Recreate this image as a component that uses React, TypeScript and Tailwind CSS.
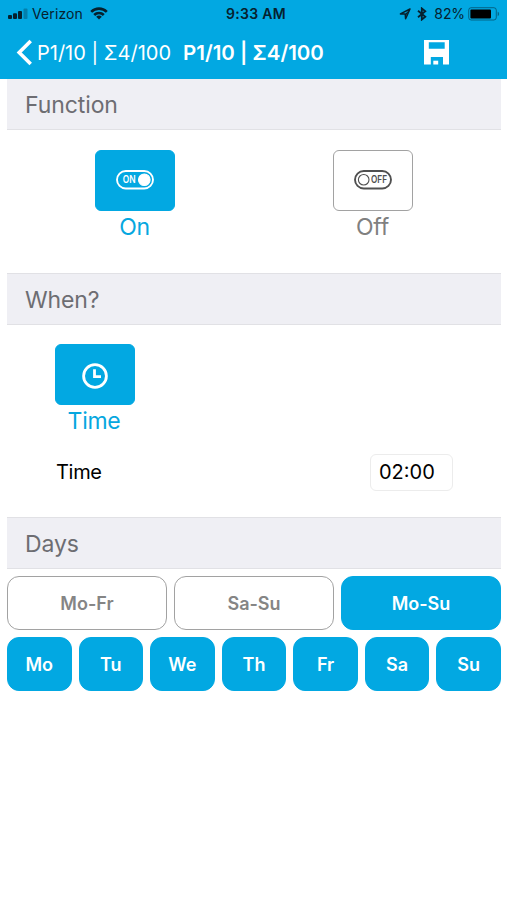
import { useState } from "react";
import type { ReactNode } from "react";

const DAYS = ["Mo", "Tu", "We", "Th", "Fr", "Sa", "Su"];

const PRESETS = [
    { label: "Mo-Fr", days: ["Mo", "Tu", "We", "Th", "Fr"] },
    { label: "Sa-Su", days: ["Sa", "Su"] },
    { label: "Mo-Su", days: DAYS },
];

function StatusBar() {
    return (
        <div className="grid h-[27px] grid-cols-[1fr_auto_1fr] items-center pl-2 pr-[7px] text-[13px] leading-none text-[#06212e]">
            <div className="flex items-center">
                <svg width="20" height="12" viewBox="0 0 20 12" fill="#06212e">
                    <rect x="0" y="7" width="4" height="4" rx="1" />
                    <rect x="5" y="5.3" width="4" height="5.7" rx="1" />
                    <rect x="10" y="3" width="4" height="8" rx="1" />
                    <rect x="15.5" y="0.5" width="4" height="10.5" rx="1" opacity="0.3" />
                </svg>
                <span className="ml-1 text-[14px] tracking-[0.1px]">Verizon</span>
                <svg className="ml-[7px]" width="18" height="13" viewBox="0 0 18 13" fill="none" stroke="#06212e" strokeWidth="2.6">
                    <path d="M1.2 4.9a11 11 0 0 1 15.6 0" />
                    <path d="M4.2 8a6.8 6.8 0 0 1 9.6 0" />
                    <path d="M9 12.6 6.2 9.8a4 4 0 0 1 5.6 0z" fill="#06212e" stroke="none" />
                </svg>
            </div>
            <div className="ml-1 text-[14px] font-semibold tracking-[0.3px]">9:33 AM</div>
            <div className="flex items-center justify-end">
                <svg width="12" height="12" viewBox="0 0 12 12" fill="none" stroke="#06212e" strokeWidth="1.5" strokeLinejoin="round">
                    <path d="M11 1 1.4 5.9l4.8.1.4 4.7z" />
                    <path d="M11 1 6.2 6V9z" fill="#06212e" stroke="none" />
                </svg>
                <svg className="ml-1.5" width="10" height="14" viewBox="0 0 10 14" fill="none" stroke="#06212e" strokeWidth="1.8">
                    <path d="m1 3.8 7.3 6L4.8 12.6V1.4l3.5 2.8L1 10.2" />
                </svg>
                <span className="ml-[7px] text-[14px] tracking-[-0.1px]">82%</span>
                <svg className="ml-[3px]" width="32" height="14" viewBox="0 0 32 14">
                    <rect x="0.7" y="0.7" width="27.6" height="12.3" rx="2.5" fill="none" stroke="#06212e" strokeOpacity="0.5" />
                    <rect x="2.4" y="2.4" width="20.6" height="9" rx="1" fill="#000" />
                    <path d="M29.7 4.8c1.8.5 1.8 3.9 0 4.4z" fill="#06212e" opacity="0.5" />
                </svg>
            </div>
        </div>
    );
}

function NavBar() {
    return (
        <div className="flex h-[51px] items-center pl-4 text-white">
            <svg width="17" height="27" viewBox="0 0 17 27" fill="none" stroke="currentColor" strokeWidth="3.6">
                <path d="M14.7 2 3.2 13.5 14.7 25" />
            </svg>
            <span className="ml-1 w-[146px] whitespace-nowrap text-[20px]">P1/10 | Σ4/100</span>
            <span className="w-[241px] whitespace-nowrap pt-px text-[20.5px] font-semibold">P1/10 | Σ4/100</span>
            <svg width="26" height="25" viewBox="0 0 26 25" fill="currentColor">
                <path fillRule="evenodd" d="M0 0h25v24.5H19v-7.5H6.8v7.5H0zM4.8 2.3v6.4h15.9V2.3z" />
                <path d="M9.3 24.5v-3.8h4.9v3.8z" />
            </svg>
        </div>
    );
}

function SectionHeader({ title, first }: { title: string; first?: boolean }) {
    return (
        <h2
            className={`flex items-center border-b border-[#e1e1e5] bg-[#efeff4] pl-[18px] text-[23px] tracking-[-0.1px] text-[#6d6d72] ${
                first ? "h-[51px] pt-[3px]" : "h-[52px] border-t pt-[3px]"
            }`}
        >
            {title}
        </h2>
    );
}

function ToggleIcon({ on }: { on?: boolean }) {
    return (
        <svg className="-mt-0.5" width="38" height="20" viewBox="0 0 38 20" fill="none" stroke="currentColor">
            <rect x="1" y="1" width="36" height="17.5" rx="8.75" strokeWidth="1.9" />
            <circle cx={on ? 28.3 : 9.7} cy="9.75" r={on ? 5.8 : 5.3} fill={on ? "currentColor" : "none"} strokeWidth="1.1" />
            <text
                x={on ? 6.8 : 17}
                y="13.4"
                fill="currentColor"
                stroke="none"
                fontSize="10.4"
                fontWeight="600"
                textLength={on ? 12.8 : 16}
                lengthAdjust="spacingAndGlyphs"
            >
                {on ? "ON" : "OFF"}
            </text>
        </svg>
    );
}

function ClockIcon() {
    return (
        <svg className="mt-0.5" width="26" height="26" viewBox="0 0 26 26" fill="none" stroke="currentColor">
            <circle cx="13" cy="13" r="11.4" strokeWidth="2.8" />
            <path d="M12.5 6.3v7.3H19" strokeWidth="2.8" />
        </svg>
    );
}

interface TileProps {
    label: string;
    active: boolean;
    onClick?: () => void;
    children: ReactNode;
}

function Tile({ label, active, onClick, children }: TileProps) {
    return (
        <button onClick={onClick} className={`flex w-20 flex-col items-center ${active ? "text-[#06a7df]" : "text-[#808080]"}`}>
            <span
                className={`flex h-[61px] w-full items-center justify-center rounded-[6px] border ${
                    active ? "border-[#02a8e2] bg-[#02a8e2] text-white" : "border-[#a2a2a2] bg-white text-[#505050]"
                }`}
            >
                {children}
            </span>
            <span className="-ml-px text-[23px] leading-[32px] tracking-[-0.3px]">{label}</span>
        </button>
    );
}

function DayButton({ label, active, onClick }: { label: string; active: boolean; onClick: () => void }) {
    return (
        <button
            onClick={onClick}
            className={`h-[54px] rounded-[12px] border text-[18px] font-semibold ${
                active ? "border-[#02a8e2] bg-[#02a8e2] text-white" : "border-[#a2a2a2] bg-white text-[#858585]"
            }`}
        >
            {label}
        </button>
    );
}

function App() {
    const [isOn, setIsOn] = useState(true);
    const [selected, setSelected] = useState<string[]>(DAYS);

    const toggleDay = (day: string) => {
        setSelected((prev) => (prev.includes(day) ? prev.filter((d) => d !== day) : [...prev, day]));
    };

    const isPreset = (days: string[]) => days.length === selected.length && days.every((d) => selected.includes(d));

    return (
        <div className="min-h-screen bg-white font-['Inter',sans-serif]">
            <header className="h-[79px] bg-[#02a8e2]">
                <StatusBar />
                <NavBar />
            </header>

            <main className="ml-[7px] mr-[6px]">
                <section className="h-[194px]">
                    <SectionHeader title="Function" first />
                    <div className="grid grid-cols-[238px_238px] pl-[9px] pt-5">
                        <div className="flex justify-center">
                            <Tile label="On" active={isOn} onClick={() => setIsOn(true)}>
                                <ToggleIcon on />
                            </Tile>
                        </div>
                        <div className="flex justify-center">
                            <Tile label="Off" active={!isOn} onClick={() => setIsOn(false)}>
                                <ToggleIcon />
                            </Tile>
                        </div>
                    </div>
                </section>

                <section className="h-[244px]">
                    <SectionHeader title="When?" />
                    <div className="pl-[47.5px] pt-[19px]">
                        <Tile label="Time" active>
                            <ClockIcon />
                        </Tile>
                    </div>
                    <div className="mt-[17px] flex items-center justify-between pl-[49px] pr-12 text-black">
                        <span className="-mt-0.5 text-[20px] tracking-[-0.3px]">Time</span>
                        <span className="flex h-[37px] w-[83px] items-center rounded-[6px] border border-[#ececec] pb-0.5 pl-2 text-[20px]">
                            02:00
                        </span>
                    </div>
                </section>

                <section>
                    <SectionHeader title="Days" />
                    <div className="mt-[7px] grid grid-cols-3 gap-[7px]">
                        {PRESETS.map((preset) => (
                            <DayButton
                                key={preset.label}
                                label={preset.label}
                                active={isPreset(preset.days)}
                                onClick={() => setSelected(preset.days)}
                            />
                        ))}
                    </div>
                    <div className="mt-[7px] grid grid-cols-7 gap-[7px]">
                        {DAYS.map((day) => (
                            <DayButton key={day} label={day} active={selected.includes(day)} onClick={() => toggleDay(day)} />
                        ))}
                    </div>
                </section>
            </main>
        </div>
    );
}

export default App;
